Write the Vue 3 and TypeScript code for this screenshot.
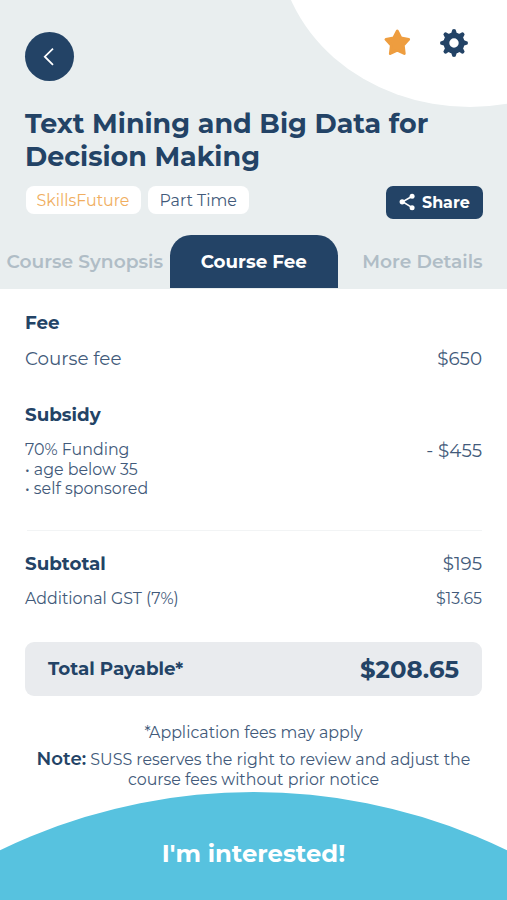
<script setup lang="ts">
import { ref } from 'vue'

interface FeeLine {
  label: string
  amount: string
}

const tabs: string[] = ['Course Synopsis', 'Course Fee', 'More Details']
const activeTab = ref('Course Fee')

const courseFee: FeeLine = { label: 'Course fee', amount: '$650' }
const gst: FeeLine = { label: 'Additional GST (7%)', amount: '$13.65' }
const subsidyTerms: string[] = ['70% Funding', '• age below 35', '• self sponsored']
const gearAngles: number[] = [0, 45, 90, 135, 180, 225, 270, 315]
</script>

<template>
  <div class="screen">
    <header class="header">
      <div class="blob"></div>
      <div class="toolbar">
        <button class="back" aria-label="Back">
          <svg width="49" height="49" viewBox="0 0 49 49">
            <path d="M28 16.6 L19.8 24.7 L28 32.8" fill="none" stroke="#fff" stroke-width="1.8" />
          </svg>
        </button>
        <div class="actions">
          <button class="icon" aria-label="Favourite">
            <svg width="30" height="30" viewBox="-15 -15 30 30">
              <path
                d="M0.3 -12 L3.9 -5 L11.7 -3.6 L6.3 2.2 L7.3 10.6 L0.3 7.3 L-6.7 10.6 L-5.7 2.2 L-11.1 -3.6 L-3.3 -5 Z"
                fill="#ee9d3f" stroke="#ee9d3f" stroke-width="2.8" stroke-linejoin="round"
              />
            </svg>
          </button>
          <button class="icon" aria-label="Settings">
            <svg width="30" height="30" viewBox="-15 -15 30 30">
              <circle r="7.6" fill="none" stroke="#234366" stroke-width="5.8" />
              <path
                v-for="angle in gearAngles" :key="angle" :transform="`rotate(${angle})`"
                d="M-3.9 -9.2 Q-2.3 -10 -2.1 -11.9 A2.1 2.1 0 0 1 2.1 -11.9 Q2.3 -10 3.9 -9.2 Z"
                fill="#234366"
              />
            </svg>
          </button>
        </div>
      </div>

      <h1 class="title">Text Mining and Big Data for<br />Decision Making</h1>

      <div class="meta">
        <div class="chips">
          <span class="chip chip-accent">SkillsFuture</span>
          <span class="chip">Part Time</span>
        </div>
        <button class="share">
          <svg width="17" height="18" viewBox="0 0 17 18">
            <path d="M13.2 3.2 L3.6 8.8 L13.2 14.6" fill="none" stroke="#fff" stroke-width="1.6" />
            <circle cx="13.1" cy="3.2" r="2.5" fill="#fff" />
            <circle cx="3.2" cy="8.8" r="2.6" fill="#fff" />
            <circle cx="13.1" cy="14.7" r="2.5" fill="#fff" />
          </svg>
          <span>Share</span>
        </button>
      </div>

      <nav class="tabs">
        <button
          v-for="tab in tabs" :key="tab"
          :class="['tab', { active: tab === activeTab }]"
          @click="activeTab = tab"
        >{{ tab }}</button>
      </nav>
    </header>

    <main class="content">
      <h2 class="heading">Fee</h2>
      <div class="row fee-row">
        <span>{{ courseFee.label }}</span>
        <span>{{ courseFee.amount }}</span>
      </div>

      <h2 class="heading subsidy-heading">Subsidy</h2>
      <div class="row subsidy-row">
        <ul class="terms">
          <li v-for="term in subsidyTerms" :key="term">{{ term }}</li>
        </ul>
        <span>- $455</span>
      </div>

      <hr class="divider" />

      <div class="row subtotal-row">
        <h2 class="heading">Subtotal</h2>
        <span>$195</span>
      </div>
      <div class="row gst-row">
        <span>{{ gst.label }}</span>
        <span>{{ gst.amount }}</span>
      </div>

      <div class="total">
        <span class="total-label">Total Payable*</span>
        <span class="total-amount">$208.65</span>
      </div>

      <p class="apply">*Application fees may apply</p>
      <p class="note">
        <strong>Note:</strong> SUSS reserves the right to review and adjust the<br />course fees without prior notice
      </p>
    </main>

    <footer class="footer">
      <svg class="curve" viewBox="0 0 507 108" width="507" height="108">
        <circle cx="253.5" cy="581" r="581" fill="#57c2df" />
      </svg>
      <button class="cta">I'm interested!</button>
    </footer>
  </div>
</template>

<style>
body {
  margin: 0;
}
</style>

<style scoped>
.screen {
  display: flex;
  flex-direction: column;
  box-sizing: border-box;
  width: 507px;
  height: 900px;
  overflow: hidden;
  background: #fff;
  color: #425a7a;
  font-family: Montserrat, Inter, sans-serif;
  font-size: 15.85px;
}
button {
  padding: 0;
  border: 0;
  background: none;
  font-family: inherit;
  cursor: pointer;
}
svg {
  display: block;
}
.header {
  position: relative;
  display: flex;
  flex-direction: column;
  flex: none;
  box-sizing: border-box;
  height: 289px;
  overflow: hidden;
  background: #e9eeef;
}
.blob {
  position: absolute;
  left: 278px;
  top: -228px;
  width: 384px;
  height: 335px;
  border-radius: 50%;
  background: #fff;
}
.toolbar {
  position: relative;
  display: flex;
  justify-content: space-between;
  height: 81px;
  padding: 0 38px 0 25px;
}
.back {
  width: 49px;
  height: 49px;
  margin-top: 32px;
  border-radius: 50%;
  background: #234366;
}
.actions {
  display: flex;
  gap: 27px;
  height: 30px;
  margin-top: 28px;
}
.title {
  position: relative;
  margin: 26px 0 0 25px;
  color: #234366;
  font-size: 26.93px;
  font-weight: 700;
  line-height: 33px;
}
.meta {
  display: flex;
  justify-content: space-between;
  margin: 13px 24.5px 0 25.5px;
}
.chips {
  display: flex;
  gap: 7px;
}
.chip {
  box-sizing: border-box;
  height: 27.5px;
  padding: 1px 12px 0 11px;
  border-radius: 8px;
  background: #fff;
  line-height: 27.5px;
}
.chip-accent {
  color: #f0ae60;
}
.share {
  display: flex;
  align-items: center;
  gap: 6px;
  width: 97px;
  height: 32.5px;
  box-sizing: border-box;
  padding-left: 13.5px;
  border-radius: 7px;
  background: #234366;
  color: #fff;
  font-size: 15.9px;
  font-weight: 700;
}
.tabs {
  display: grid;
  grid-template-columns: 169.5px 168.5px 1fr;
  height: 53.5px;
  margin-top: 16px;
}
.tab {
  color: #b0bdc6;
  font-size: 18.65px;
  font-weight: 600;
  white-space: nowrap;
}
.tab.active {
  border-radius: 21px 21px 0 0;
  background: #234366;
  color: #fff;
  font-size: 18.3px;
  font-weight: 700;
}
.content {
  display: flex;
  flex-direction: column;
  flex: none;
  box-sizing: border-box;
  height: 503px;
  padding: 22px 25px 0;
}
.heading {
  margin: 0;
  color: #234366;
  font-size: 18.3px;
  font-weight: 700;
  line-height: 24px;
}
.row {
  display: flex;
  justify-content: space-between;
  font-size: 18.3px;
  line-height: 24px;
}
.fee-row {
  margin-top: 12px;
}
.subsidy-heading {
  margin-top: 32px;
}
.subsidy-row {
  margin-top: 12px;
}
.terms {
  margin: 1px 0 0;
  padding: 0;
  list-style: none;
  font-size: 15.85px;
  line-height: 19.5px;
}
.divider {
  width: 455px;
  height: 1px;
  margin: 31px 0 0 2px;
  border: 0;
  background: #f2f4f5;
}
.subtotal-row {
  margin-top: 21px;
}
.gst-row {
  margin-top: 13px;
  font-size: 15.85px;
  line-height: 20px;
}
.total {
  display: flex;
  align-items: center;
  justify-content: space-between;
  box-sizing: border-box;
  height: 54px;
  margin-top: 33px;
  padding: 0 23px;
  border-radius: 9px;
  background: #e9ebee;
  color: #234366;
  font-weight: 700;
}
.total-label {
  font-size: 18.3px;
}
.total-amount {
  font-size: 24.4px;
}
.apply {
  margin: 27px 0 0;
  line-height: 20px;
  text-align: center;
}
.note {
  margin: 6px 0 0;
  line-height: 20px;
  text-align: center;
  white-space: nowrap;
}
.note strong {
  color: #234366;
  font-size: 18.2px;
  font-weight: 600;
}
.footer {
  display: grid;
  flex: none;
  height: 108px;
}
.curve,
.cta {
  grid-area: 1 / 1;
}
.cta {
  padding-top: 14px;
  color: #fff;
  font-size: 24.3px;
  font-weight: 700;
}
</style>
